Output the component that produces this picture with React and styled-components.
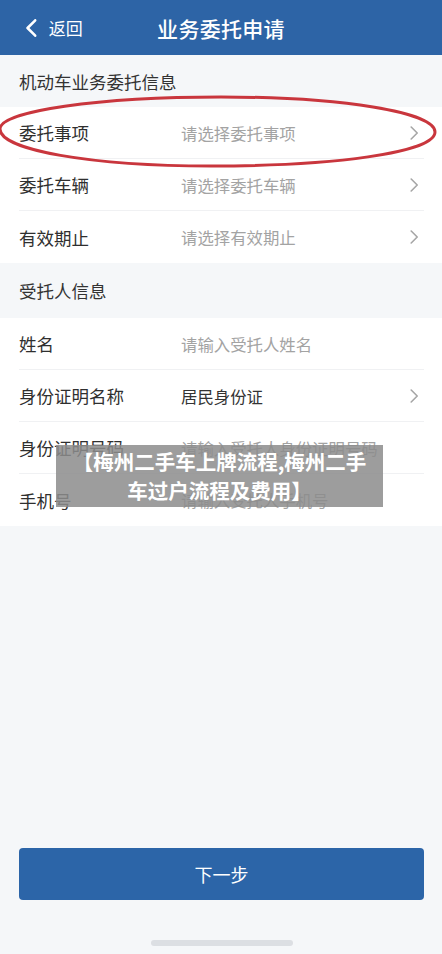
import React from 'react'
import styled, { createGlobalStyle } from 'styled-components'

const GlobalStyle = createGlobalStyle`
  html, body { margin: 0; padding: 0; background: #f5f7f9; }
  body { font-family: "Noto Sans CJK SC", "Noto Sans", sans-serif; }
  * { box-sizing: border-box; }
`

const vehicleRows = [
  { label: '委托事项', value: '请选择委托事项', arrow: true, hint: true },
  { label: '委托车辆', value: '请选择委托车辆', arrow: true, hint: true },
  { label: '有效期止', value: '请选择有效期止', arrow: true, hint: true },
]

const personRows = [
  { label: '姓名', value: '请输入受托人姓名', hint: true },
  { label: '身份证明名称', value: '居民身份证', arrow: true },
  { label: '身份证明号码', value: '请输入受托人身份证明号码', hint: true },
  { label: '手机号', value: '请输入受托人手机号', hint: true },
]

function Chevron({ color = '#a6a6a6', size = 14, width = 1.6 }) {
  return (
    <svg width={size * 0.6} height={size} viewBox="0 0 8 14" fill="none">
      <path d="M1 1l6 6-6 6" stroke={color} strokeWidth={width} strokeLinecap="round" strokeLinejoin="round" />
    </svg>
  )
}

function Row({ item, last }) {
  return (
    <RowItem last={last}>
      <Label>{item.label}</Label>
      <Value hint={item.hint}>{item.value}</Value>
      <Arrow>{item.arrow && <Chevron />}</Arrow>
    </RowItem>
  )
}

export default function App() {
  return (
    <Page>
      <GlobalStyle />
      <Header>
        <Back>
          <Chevron color="#ffffff" size={18} width={2} />
          <span>返回</span>
        </Back>
        <Title>业务委托申请</Title>
      </Header>

      <SectionTitle>机动车业务委托信息</SectionTitle>
      <Group>
        {vehicleRows.map((item, i) => (
          <Row key={i} item={item} last={i === vehicleRows.length - 1} />
        ))}
        <Mark viewBox="0 0 442 80" preserveAspectRatio="none">
          <path
            d="M4 34 C 4 16, 103 2, 225 2 C 345 2, 439 17, 439 37 C 439 58, 335 71, 215 71 C 95 71, 4 55, 4 34 Z"
            fill="none"
            stroke="#c9363d"
            strokeWidth="3"
          />
        </Mark>
      </Group>

      <SectionTitle tall>受托人信息</SectionTitle>
      <Group>
        {personRows.map((item, i) => (
          <Row key={i} item={item} last={i === personRows.length - 1} />
        ))}
        <Caption>【梅州二手车上牌流程,梅州二手<br />车过户流程及费用】</Caption>
      </Group>

      <Spacer />
      <Footer>
        <NextButton>下一步</NextButton>
        <HomeBar />
      </Footer>
    </Page>
  )
}

const Page = styled.div`
  width: 442px;
  min-height: 954px;
  display: flex;
  flex-direction: column;
  background: #f5f7f9;
`

const Header = styled.div`
  height: 55px;
  background: #2d64a6;
  position: relative;
  display: flex;
  align-items: center;
  justify-content: center;
  color: #fff;
`

const Back = styled.div`
  position: absolute;
  left: 26px;
  top: 0;
  bottom: 0;
  display: flex;
  align-items: center;
  gap: 12px;
  font-size: 17px;
  svg { transform: scaleX(-1); }
`

const Title = styled.div`
  font-size: 21px;
  font-weight: 500;
  letter-spacing: 0.3px;
  padding-top: 1px;
`

const SectionTitle = styled.div`
  height: ${p => (p.tall ? '55px' : '52px')};
  padding: 0 19px;
  display: flex;
  align-items: center;
  font-size: 17.5px;
  color: #333;
  background: #f5f7f9;
`

const Group = styled.div`
  position: relative;
  background: #fff;
`

const RowItem = styled.div`
  height: 52px;
  margin: 0 18px 0 19px;
  display: grid;
  grid-template-columns: 162px 1fr 14px;
  align-items: center;
  border-bottom: ${p => (p.last ? 'none' : '1px solid #f0f1f3')};
`

const Label = styled.div`
  font-size: 17.5px;
  color: #2f2f2f;
`

const Value = styled.div`
  font-size: 16.4px;
  color: ${p => (p.hint ? '#a3a3a3' : '#333')};
  white-space: nowrap;
`

const Arrow = styled.div`
  display: flex;
  align-items: center;
  justify-content: flex-start;
`

const Mark = styled.svg`
  position: absolute;
  left: -4px;
  top: -12px;
  width: 442px;
  height: 80px;
  overflow: visible;
  pointer-events: none;
`

const Caption = styled.div`
  position: absolute;
  left: 56px;
  top: 127px;
  width: 327px;
  height: 62px;
  background: rgba(140, 140, 140, 0.85);
  color: #fff;
  font-size: 20.5px;
  font-weight: 700;
  line-height: 29px;
  text-align: center;
  white-space: nowrap;
  padding-top: 2px;
`

const Spacer = styled.div`
  flex: 1;
`

const Footer = styled.div`
  display: flex;
  flex-direction: column;
  align-items: center;
  padding: 0 18px 8px 19px;
`

const NextButton = styled.div`
  width: 100%;
  height: 52px;
  border-radius: 4px;
  background: #2c65a8;
  color: #fff;
  font-size: 18px;
  display: flex;
  align-items: center;
  justify-content: center;
  margin-bottom: 40px;
`

const HomeBar = styled.div`
  width: 142px;
  height: 6px;
  border-radius: 3px;
  background: #dcdfe3;
`
